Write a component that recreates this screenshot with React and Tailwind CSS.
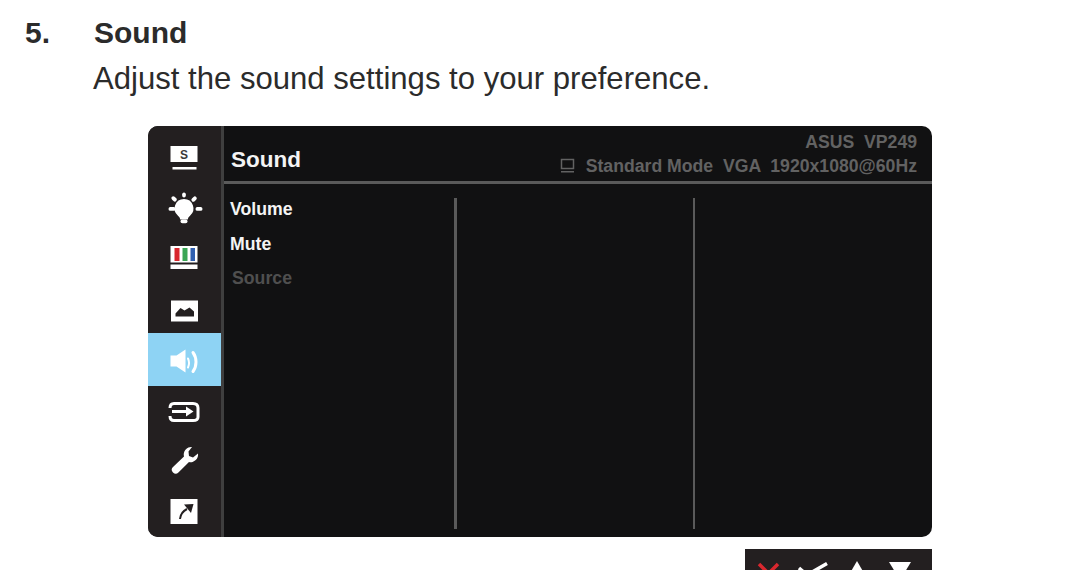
import React from "react";

// sidebar icons, drawn in a 40x40 box
const SplendidIcon = () => (
  <svg width="40" height="40" viewBox="0 0 40 40">
    <rect x="5.500" y="10" width="27" height="16" fill="#fff" />
    <rect x="7.500" y="31" width="24" height="2.500" fill="#fff" />
    <text x="19" y="22.500" textAnchor="middle" fontSize="12" fontWeight="700" fontFamily="Liberation Sans" fill="#3a3a3a">S</text>
  </svg>
);

const BulbIcon = () => (
  <svg width="40" height="40" viewBox="0 0 40 40" fill="#fff">
    <path d="M19 12a9.500 9.500 0 0 0-6 16.800c1.500 1.200 2 2.200 2.200 3.700h7.600c.2-1.500.7-2.500 2.200-3.700A9.500 9.500 0 0 0 19 12z" />
    <rect x="15.500" y="32.500" width="7" height="3.800" rx="1.800" />
    <rect x="17.200" y="5.500" width="3.600" height="5" rx="1.800" />
    <rect x="3.500" y="20" width="7" height="3.800" rx="1.900" />
    <rect x="30.500" y="20" width="7" height="3.800" rx="1.900" />
    <rect x="7.200" y="9" width="3.800" height="6" rx="1.900" transform="rotate(-45 9 12)" />
    <rect x="27.200" y="9" width="3.800" height="6" rx="1.900" transform="rotate(45 29 12)" />
  </svg>
);

const ColorIcon = () => (
  <svg width="40" height="40" viewBox="0 0 40 40">
    <rect x="5.500" y="9" width="27" height="16.500" fill="#fff" />
    <rect x="9.500" y="11" width="5" height="13" fill="#d9272e" />
    <rect x="17.500" y="11" width="5" height="13" fill="#3aa655" />
    <rect x="25.500" y="11" width="4.500" height="13" fill="#2f5fb0" />
    <rect x="5.500" y="27.500" width="27" height="4.500" fill="#fff" />
  </svg>
);

const ImageIcon = () => (
  <svg width="40" height="40" viewBox="0 0 40 40">
    <rect x="6" y="8.500" width="27" height="21" fill="#fff" />
    <path d="M10.500 24.500v-3l5-5.500 4 2.500 5-3 4.500 4v5z" fill="#231f20" />
  </svg>
);

const SpeakerIcon = () => (
  <svg width="40" height="40" viewBox="0 0 40 40" fill="none">
    <path d="M5.500 15.500h6l9-6v23l-9-6h-6z" fill="#fff" />
    <path d="M23 18.500c1.300 2.800 1.300 6.200 0 9" stroke="#fff" strokeWidth="2" strokeLinecap="round" />
    <path d="M28 12.500c4 5.500 4 13.500 0 19" stroke="#fff" strokeWidth="3" strokeLinecap="round" />
  </svg>
);

const InputIcon = () => (
  <svg width="40" height="40" viewBox="0 0 40 40" fill="none">
    <path d="M5 16c0-3 1.500-4.500 4-4.500h19c3 0 5 1.500 5 4.500v9c0 2.500-2 3.500-5 3.500H9c-2.500 0-4-1.500-4-4.500" stroke="#fff" strokeWidth="3" />
    <path d="M7 19.500h15" stroke="#fff" strokeWidth="3" />
    <path d="M21 14.500l7.500 5-7.500 5z" fill="#fff" />
  </svg>
);

const WrenchIcon = () => (
  <svg width="40" height="40" viewBox="0 0 40 40">
    <path d="M27 7a7.500 7.500 0 0 0-8 9.500L8 27a3.800 3.800 0 0 0 5.400 5.400L24 22a7.500 7.500 0 0 0 9-8.500l-5 4-4-1.500-.5-4.500z" fill="#fff" />
  </svg>
);

const ShortcutIcon = () => (
  <svg width="40" height="40" viewBox="0 0 40 40" fill="none">
    <rect x="5.500" y="7" width="27" height="25" fill="#fff" />
    <path d="M15 27c.5-5 3-8 7-10" stroke="#231f20" strokeWidth="2" />
    <path d="M19 12.500l9.500-.5-2.500 9z" fill="#231f20" />
  </svg>
);

const navItems = [
  { icon: <SplendidIcon />, cls: "h-[60px] pt-0" },
  { icon: <BulbIcon />, cls: "h-[42px] pt-0" },
  { icon: <ColorIcon />, cls: "h-[58px] pt-0" },
  { icon: <ImageIcon />, cls: "h-[47px] pt-[4px]" },
  { icon: <SpeakerIcon />, cls: "h-[53px] bg-[#8ed3f4]" },
  { icon: <InputIcon />, cls: "h-[52px] pt-0" },
  { icon: <WrenchIcon />, cls: "h-[44px] pt-0" },
  { icon: <ShortcutIcon />, cls: "h-[55px] pt-[5px]" },
];

export default function App() {
  return (
    <div className="w-[1080px] h-[570px] overflow-hidden bg-white text-[#2b2b2b] font-['Liberation_Sans',sans-serif]">
      {/* Manual heading */}
      <div className="flex pl-[25px] pt-[15px] text-[30px] leading-[36px] font-bold">
        <span className="w-[69px]">5.</span>
        <span>Sound</span>
      </div>
      <p className="pl-[93px] mt-[10px] text-[31.100px] leading-[36px]">
        Adjust the sound settings to your preference.
      </p>

      {/* OSD panel */}
      <div className="ml-[148px] mt-[29px] w-[784px] h-[411px] flex rounded-[10px] overflow-hidden bg-[#111112]">
        <div className="w-[73px] shrink-0 flex flex-col bg-[#231f20]">
          {navItems.map((item, i) => (
            <div key={i} className={`flex items-center justify-center ${item.cls}`}>
              {item.icon}
            </div>
          ))}
        </div>
        <div className="w-[3px] shrink-0 bg-[#3f3f3f]" />

        <div className="flex-1 flex flex-col">
          <div className="h-[55px] shrink-0 flex items-center justify-between pl-[7px] pr-[15px] border-b-[3px] border-[#5a5a5a] box-content">
            <span className="text-[22.500px] font-bold text-[#f4f4f4] pt-[12px]">Sound</span>
            <div className="flex flex-col items-end text-[17.650px] leading-[24px] font-bold text-[#626262] whitespace-pre pt-[1px]">
              <span>ASUS  VP249</span>
              <div className="flex items-center">
                <svg width="18" height="18" viewBox="0 0 18 18" fill="none" className="mr-[9px]">
                  <rect x="2.500" y="2.500" width="12" height="9" stroke="#626262" strokeWidth="1.500" />
                  <rect x="2" y="14" width="13" height="1.500" fill="#626262" />
                </svg>
                <span>Standard Mode  VGA  1920x1080@60Hz</span>
              </div>
            </div>
          </div>

          <div className="flex-1 flex pt-[14px] pb-[8px]">
            <ul className="w-[230px] shrink-0 pl-[6px] text-[17.700px] font-bold">
              <li className="h-[34.500px] leading-[22px] text-[#f4f4f4]">Volume</li>
              <li className="h-[34.500px] leading-[22px] text-[#f4f4f4]">Mute</li>
              <li className="h-[34.500px] leading-[22px] pl-[2px] text-[#4f4f4f]">Source</li>
            </ul>
            <div className="w-[2.500px] shrink-0 bg-[#5a5a5a]" />
            <div className="w-[236px] shrink-0" />
            <div className="w-[2.500px] shrink-0 bg-[#5a5a5a]" />
          </div>
        </div>
      </div>

      {/* Key guide, cut off by the page edge */}
      <div className="ml-[745px] mt-[12px] w-[187px] h-[40px] flex items-start bg-[#231f20]">
        <svg width="187" height="40" viewBox="0 0 187 40" fill="none">
          <path d="M14 15l19 19M33 15L14 34" stroke="#d9272e" strokeWidth="3.500" />
          <path d="M54 19l8 7L82 14.500" stroke="#fff" strokeWidth="3.500" />
          <path d="M112 12l11 19h-22z" fill="#fff" />
          <path d="M144 13h22l-11 18z" fill="#fff" />
        </svg>
      </div>
    </div>
  );
}
